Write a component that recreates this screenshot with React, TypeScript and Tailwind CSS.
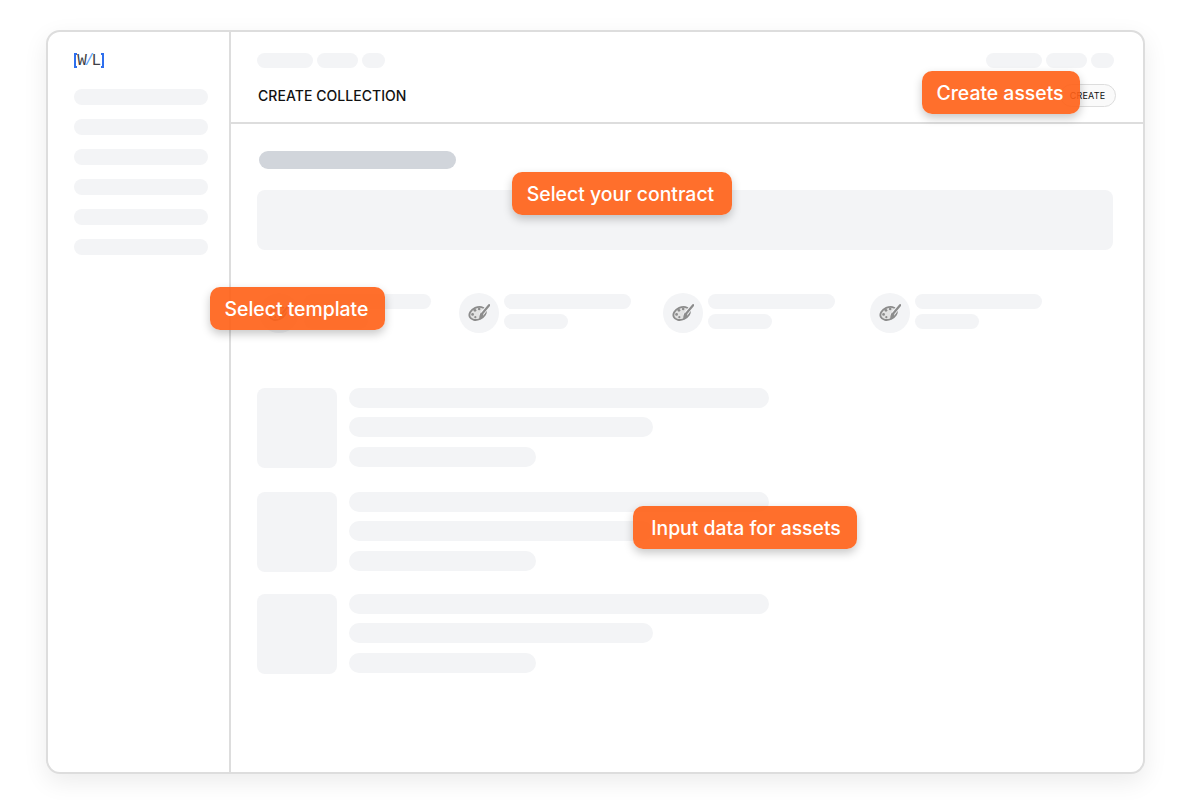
const sidebarItems = [1, 2, 3, 4, 5, 6]

const templates = [
  { id: 'a', className: 'ml-[2px]' },
  { id: 'b', className: 'ml-[28px]' },
  { id: 'c', className: 'ml-[32px]' },
  { id: 'd', className: 'ml-[35px]' },
]

const assetRows = [
  { id: 'one', className: 'mb-[24px]' },
  { id: 'two', className: 'mb-[22px]' },
  { id: 'three', className: '' },
]

const PaletteIcon = () => (
  <svg viewBox="0 0 24 24" className="h-[22px] w-[22px] text-[#8c8c8c]">
    <ellipse
      cx="10.5"
      cy="12.5"
      rx="9.4"
      ry="6.6"
      transform="rotate(-24 10.5 12.5)"
      fill="#e2e2e2"
      stroke="currentColor"
      strokeWidth="2"
    />
    <circle cx="5" cy="13.5" r="1.5" fill="#8c8c8c" />
    <circle cx="7.6" cy="9" r="1.5" fill="#8c8c8c" />
    <circle cx="12.2" cy="7.6" r="1.4" fill="#8c8c8c" />
    <circle cx="8" cy="16.6" r="1.2" fill="#8c8c8c" />
    <path d="M23 3.5 L14.5 13.5" stroke="#f3f4f6" strokeWidth="4.5" strokeLinecap="round" />
    <path d="M23 3.5 L15.5 12.5" stroke="currentColor" strokeWidth="2.4" strokeLinecap="round" />
    <path d="M14 11.5 L17 14 C16.6 16.4 14.6 19 12 19.4 C12.6 17 12 14.4 14 11.5 Z" fill="currentColor" />
  </svg>
)

const Callout = ({ label, className }: { label: string; className: string }) => (
  <div
    className={`absolute z-10 flex h-[43px] items-center justify-center rounded-[10px] bg-[#ff5f15]/90 pt-[2px] text-[19.4px] font-medium text-white shadow-[0_4px_10px_rgba(0,0,0,0.22)] ${className}`}
  >
    {label}
  </div>
)

export default function App() {
  return (
    <div className="relative h-[800px] w-[1200px] overflow-hidden bg-white pl-[46px] pt-[30px] font-['Inter',sans-serif]">
      {/* Window */}
      <div className="flex h-[744px] w-[1099px] overflow-hidden rounded-[14px] border-2 border-[#dddddd] bg-white shadow-[0_8px_24px_rgba(0,0,0,0.08)]">
        {/* Sidebar */}
        <aside className="h-full w-[183px] shrink-0 border-r-2 border-[#dddddd] pl-[26px] pr-[21px] pt-[21px]">
          <div className="mb-[21px] flex h-[15px] w-[30px] items-center justify-between font-['Liberation_Mono',monospace] text-[16px] leading-none text-[#3f3f46]">
            <span className="h-[15px] w-[4px] border-y-2 border-l-2 border-[#2f6fed]" />
            <span className="tracking-[-2.4px] pr-[2px]">
              W<span className="text-[#60a5fa]">/</span>L
            </span>
            <span className="h-[15px] w-[4px] border-y-2 border-r-2 border-[#2f6fed]" />
          </div>
          <div className="flex flex-col gap-[14px]">
            {sidebarItems.map((item) => (
              <div key={item} className="h-[16px] rounded-full bg-[#f3f4f6]" />
            ))}
          </div>
        </aside>

        {/* Main */}
        <main className="min-w-0 flex-1">
          <header className="h-[92px] border-b-2 border-[#dddddd] pl-[26px] pr-[29px] pt-[21px]">
            <div className="flex justify-between">
              <div className="flex gap-[4px]">
                <div className="h-[15px] w-[56px] rounded-full bg-[#f3f4f6]" />
                <div className="h-[15px] w-[41px] rounded-full bg-[#f3f4f6]" />
                <div className="h-[15px] w-[23px] rounded-full bg-[#f3f4f6]" />
              </div>
              <div className="flex gap-[4px]">
                <div className="h-[15px] w-[56px] rounded-full bg-[#f3f4f6]" />
                <div className="h-[15px] w-[41px] rounded-full bg-[#f3f4f6]" />
                <div className="h-[15px] w-[23px] rounded-full bg-[#f3f4f6]" />
              </div>
            </div>
            <div className="mt-[16px] flex items-center justify-between">
              <div className="pl-[1px] text-[14px] font-medium leading-[23px] tracking-[0.05px] text-[#111111]">CREATE COLLECTION</div>
              <button className="-mr-[2px] h-[23px] w-[56px] rounded-full border border-[#dddddd] bg-[#fafafa] pr-[1px] text-[9px] font-normal tracking-[0.2px] text-[#111111]">
                CREATE
              </button>
            </div>
          </header>

          <div className="pl-[26px] pr-[30px] pt-[27px]">
            <div className="ml-[2px] h-[18px] w-[197px] rounded-full bg-[#d1d5db]" />
            <div className="mt-[21px] h-[60px] rounded-[8px] bg-[#f3f4f6]" />

            {/* Templates */}
            <div className="mt-[43px] flex">
              {templates.map((template) => (
                <div key={template.id} className={`flex gap-[5px] ${template.className}`}>
                  <div className="flex h-[40px] w-[40px] items-center justify-center rounded-full bg-[#f3f4f6]">
                    <PaletteIcon />
                  </div>
                  <div className="pt-[1px]">
                    <div className="h-[15px] w-[127px] rounded-full bg-[#f3f4f6]" />
                    <div className="mt-[5px] h-[15px] w-[64px] rounded-full bg-[#f3f4f6]" />
                  </div>
                </div>
              ))}
            </div>

            {/* Asset rows */}
            <div className="mt-[55px]">
              {assetRows.map((row) => (
                <div key={row.id} className={`flex gap-[12px] ${row.className}`}>
                  <div className="h-[80px] w-[80px] rounded-[8px] bg-[#f3f4f6]" />
                  <div>
                    <div className="h-[20px] w-[420px] rounded-full bg-[#f3f4f6]" />
                    <div className="mt-[9px] h-[20px] w-[304px] rounded-full bg-[#f3f4f6]" />
                    <div className="mt-[10px] h-[20px] w-[187px] rounded-full bg-[#f3f4f6]" />
                  </div>
                </div>
              ))}
            </div>
          </div>
        </main>
      </div>

      <Callout label="Create assets" className="left-[922px] top-[71px] w-[158px] pr-[2px]" />
      <Callout label="Select your contract" className="left-[512px] top-[172px] w-[220px] pr-[3px]" />
      <Callout label="Select template" className="left-[210px] top-[287px] w-[175px] pr-[2px]" />
      <Callout label="Input data for assets" className="left-[633px] top-[506px] w-[224px] pl-[2px]" />
    </div>
  )
}
